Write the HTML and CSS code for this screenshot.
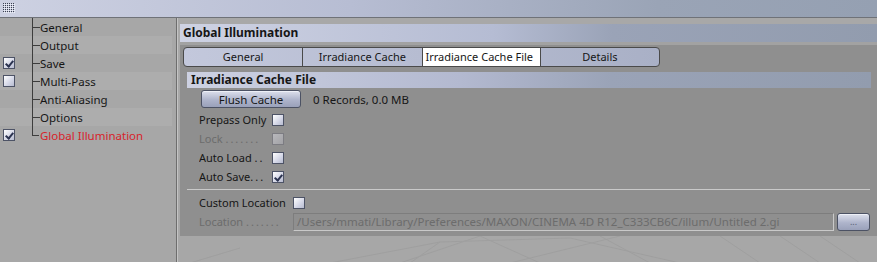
FILE: index.html
```html
<!DOCTYPE html>
<html lang="en">
<head>
    <meta charset="UTF-8">
    <title>Render Settings</title>
    <link rel="stylesheet" href="styles.css">
</head>
<body>
    <div class="titlebar">
        <svg class="grip" width="12" height="10" viewBox="0 0 12 10">
            <defs>
                <pattern id="dots" width="2" height="2" patternUnits="userSpaceOnUse">
                    <rect x="0" y="0" width="1" height="1" fill="#3c4150"/>
                    <rect x="1" y="1" width="1" height="1" fill="#eef0f8"/>
                </pattern>
            </defs>
            <rect width="12" height="10" fill="url(#dots)"/>
        </svg>
    </div>

    <div class="main">
        <div class="sidebar">
            <div class="tree-row"><span class="check-col"></span><span class="branch"></span><span class="tree-label">General</span></div>
            <div class="tree-row"><span class="check-col"></span><span class="branch"></span><span class="tree-label">Output</span></div>
            <div class="tree-row"><span class="check-col"><span class="checkbox checked"></span></span><span class="branch"></span><span class="tree-label">Save</span></div>
            <div class="tree-row"><span class="check-col"><span class="checkbox"></span></span><span class="branch"></span><span class="tree-label">Multi-Pass</span></div>
            <div class="tree-row"><span class="check-col"></span><span class="branch"></span><span class="tree-label">Anti-Aliasing</span></div>
            <div class="tree-row"><span class="check-col"></span><span class="branch"></span><span class="tree-label">Options</span></div>
            <div class="tree-row last"><span class="check-col"><span class="checkbox checked"></span></span><span class="branch"></span><span class="tree-label active">Global Illumination</span></div>
        </div>

        <div class="content">
            <div class="group-title">Global Illumination</div>
            <div class="panel">
                <div class="tabs">
                    <div class="tab">General</div>
                    <div class="tab">Irradiance Cache</div>
                    <div class="tab selected">Irradiance Cache File</div>
                    <div class="tab">Details</div>
                </div>

                <div class="section-title">Irradiance Cache File</div>

                <div class="form">
                    <div class="form-row button-row">
                        <button class="btn flush">Flush Cache</button>
                        <span class="info">0 Records, 0.0 MB</span>
                    </div>
                    <div class="form-row">
                        <span class="label">Prepass Only</span>
                        <span class="checkbox"></span>
                    </div>
                    <div class="form-row disabled">
                        <span class="label">Lock <span class="dots">.......</span></span>
                        <span class="checkbox off"></span>
                    </div>
                    <div class="form-row">
                        <span class="label">Auto Load <span class="dots">..</span></span>
                        <span class="checkbox"></span>
                    </div>
                    <div class="form-row">
                        <span class="label">Auto Save<span class="dots">...</span></span>
                        <span class="checkbox checked"></span>
                    </div>
                </div>

                <div class="separator"></div>

                <div class="form">
                    <div class="form-row">
                        <span class="label wide">Custom Location</span>
                        <span class="checkbox"></span>
                    </div>
                    <div class="form-row disabled">
                        <span class="label wide">Location <span class="dots">.......</span></span>
                        <span class="path-field">/Users/mmati/Library/Preferences/MAXON/CINEMA 4D R12_C333CB6C/illum/Untitled 2.gi</span>
                        <button class="btn browse">...</button>
                    </div>
                </div>
            </div>
            <div class="backdrop">
                <svg width="696" height="27" viewBox="0 0 696 27">
                    <g stroke="#9f9f9f" stroke-width="1" fill="none">
                        <path d="M150 27 L260 6 L390 2 L500 27"/>
                        <path d="M330 27 L440 0"/>
                        <path d="M220 27 L300 0 L360 27"/>
                        <path d="M420 0 L470 27"/>
                        <path d="M540 0 L580 27"/>
                        <path d="M600 0 L640 27"/>
                        <path d="M640 0 L680 27"/>
                        <path d="M10 27 L60 12"/>
                        <path d="M260 6 L230 27"/>
                    </g>
                </svg>
            </div>
        </div>
    </div>
</body>
</html>
```

FILE: styles.css
```css
body {
    margin: 0;
    width: 877px;
    height: 262px;
    overflow: hidden;
    font-family: 'Noto Sans', sans-serif;
    font-size: 11.5px;
    color: #161616;
    background: #a8a8a8;
}

.titlebar {
    height: 17px;
    background: linear-gradient(to right, #cdd1e2, #b7bdd3 40%, #9aa4b6 75%, #95a0b2);
    border-bottom: 1px solid #6f7278;
    position: relative;
}

.grip {
    position: absolute;
    left: 3px;
    top: 3px;
}

.main {
    display: flex;
    height: 244px;
}

/* left tree */
.sidebar {
    width: 176px;
    border-right: 1px solid #6e6e6e;
    box-shadow: 1px 0 0 #c4c4c4;
    background: #a7a7a7;
}

.tree-row {
    display: flex;
    align-items: center;
    height: 18px;
    margin-right: 4px;
}

.tree-row:nth-child(even) {
    background: #adadad;
}

.check-col {
    width: 32px;
    display: flex;
    align-items: center;
    padding-left: 3px;
    box-sizing: border-box;
}

.branch {
    width: 8px;
    height: 18px;
    position: relative;
    border-left: 1px solid #3d3d3d;
    box-sizing: border-box;
}

.branch::after {
    content: '';
    position: absolute;
    left: 0;
    top: 9px;
    width: 7px;
    border-top: 1px solid #3d3d3d;
}

.tree-row.last .branch {
    border-left: none;
}

.tree-row.last .branch::before {
    content: '';
    position: absolute;
    left: 0;
    top: 0;
    height: 9px;
    border-left: 1px solid #3d3d3d;
}

.tree-label.active {
    color: #d8232a;
}

/* checkboxes */
.checkbox {
    display: inline-block;
    width: 10px;
    height: 10px;
    border: 1px solid #4d5366;
    background: linear-gradient(135deg, #ffffff, #d3d6e6 60%, #b7bbcf);
    position: relative;
    flex: none;
}

.checkbox.checked::after {
    content: '';
    position: absolute;
    left: 3px;
    top: 1px;
    width: 3px;
    height: 6px;
    border-right: 2px solid #2b3350;
    border-bottom: 2px solid #2b3350;
    transform: rotate(40deg);
}

.checkbox.off {
    border-color: #7c7c82;
    background: linear-gradient(135deg, #b8b8bc, #a2a2a6);
}

/* right side */
.content {
    flex: 1;
    padding: 6px 0 0 3px;
    display: flex;
    flex-direction: column;
}

.group-title {
    height: 18px;
    line-height: 18px;
    padding-left: 3px;
    font-weight: bold;
    font-size: 12px;
    background: linear-gradient(to right, #ced2e3, #b5bcd3 45%, #9aa3b7 62%, #929cae);
    border-bottom: 3px solid #a2a2a2;
}

.panel {
    background: #8f8f8f;
    padding: 2px 6px 5px 3px;
}

.tabs {
    display: flex;
    width: 475px;
    height: 18px;
    border: 1px solid #4a4a4a;
    border-radius: 4px;
    overflow: hidden;
    font-size: 11px;
    background: linear-gradient(to right, #c3c8dc, #a9b0c6);
}

.tab {
    width: 119px;
    line-height: 18px;
    text-align: center;
    border-left: 1px solid #4a4a4a;
    white-space: nowrap;
}

.tab:first-child {
    border-left: none;
}

.tab.selected {
    background: #ffffff;
    text-align: left;
    padding-left: 3px;
    box-sizing: border-box;
}

.section-title {
    margin: 5px 0 0 4px;
    height: 16px;
    line-height: 16px;
    padding-left: 4px;
    font-weight: bold;
    font-size: 12px;
    background: linear-gradient(to right, #cdd1e2, #b3b9d0 40%, #9aa3b7 62%, #929cae);
}

.form {
    padding-left: 16px;
}

.form-row {
    display: flex;
    align-items: center;
    height: 19px;
}

.form-row.button-row {
    height: 22px;
}

.label {
    width: 73px;
    font-size: 11px;
    white-space: nowrap;
    overflow: hidden;
}

.label.wide {
    width: 94px;
}

.dots {
    letter-spacing: 2px;
}

.disabled .label {
    color: #6c6c6c;
}

.btn {
    font-family: inherit;
    font-size: 11.5px;
    color: #161616;
    border: 1px solid #4c5264;
    border-radius: 3px;
    background: linear-gradient(to bottom, #dde0ec, #aeb4cb 55%, #9aa1ba);
    box-shadow: inset 0 1px 0 #eef0f7;
    padding: 0;
}

.flush {
    width: 100px;
    height: 18px;
    margin-left: 2px;
}

.info {
    margin-left: 12px;
}

.separator {
    margin: 3px 1px 3px 4px;
    border-top: 1px solid #c9c9c9;
}

.path-field {
    width: 536px;
    height: 16px;
    line-height: 16px;
    padding-left: 3px;
    border: 1px solid #c9c9c9;
    border-top-color: #7d7d7d;
    border-left-color: #7d7d7d;
    color: #6c6c6c;
    white-space: nowrap;
    overflow: hidden;
}

.browse {
    width: 33px;
    height: 18px;
    margin-left: 3px;
    color: #5a6074;
    font-size: 9px;
}

.backdrop {
    flex: 1;
    background: #a7a7a7;
    overflow: hidden;
}

.backdrop svg {
    display: block;
}
```
